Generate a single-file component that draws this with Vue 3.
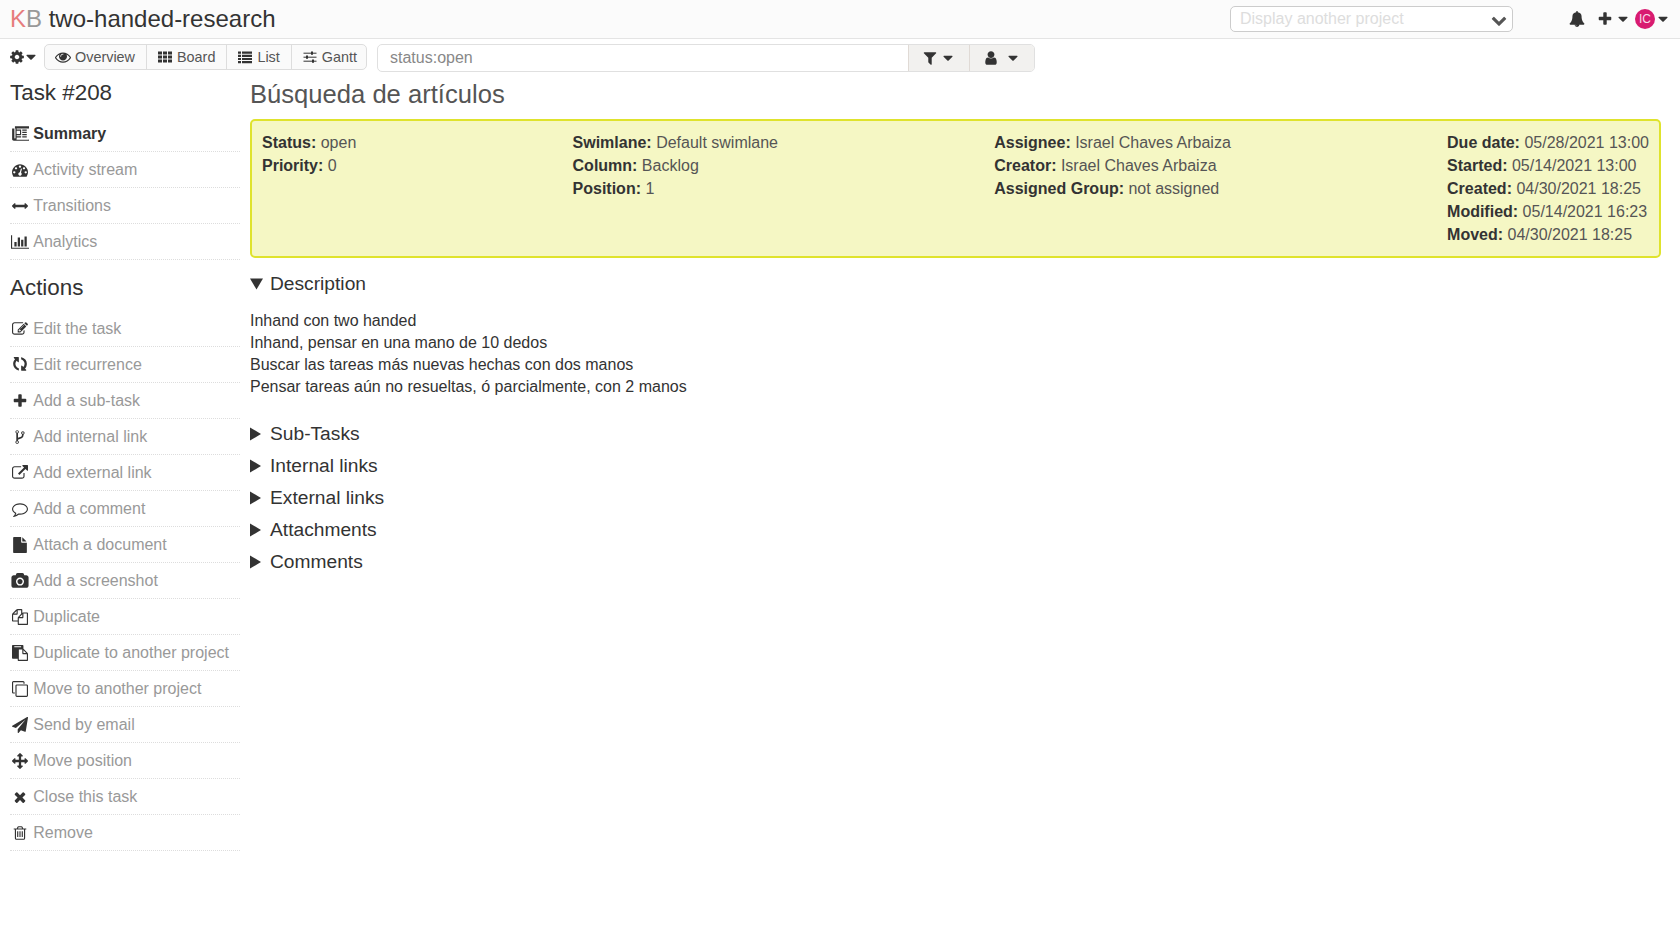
<script setup>
import { h } from 'vue'

const FA = '0 0 1792 1792'
const WIDE = '0 0 2048 1792'
const PLAIN = '0 0 16 16'

const icons = {
  cog: { vb: FA, f: 'M1152 896q0-106-75-181t-181-75-181 75-75 181 75 181 181 75 181-75 75-181zm512-109v222q0 12-8 23t-20 13l-185 28q-19 54-39 91 35 50 107 138 10 12 10 25t-9 23q-27 37-99 108t-94 71q-12 0-26-9l-138-108q-44 23-91 38-16 136-29 186-7 28-36 28h-222q-14 0-24.500-8.500t-11.500-21.500l-28-184q-49-16-90-37l-141 107q-10 9-25 9-14 0-25-11-126-114-165-168-7-10-7-23 0-12 8-23 15-21 51-66.500t54-70.500q-27-50-41-99l-183-27q-13-2-21-12.500t-8-23.500v-222q0-12 8-23t19-13l186-28q14-46 39-92-40-57-107-138-10-12-10-24 0-10 9-23 26-36 98.500-107.500t94.500-71.500q13 0 26 10l138 107q44-23 91-38 16-136 29-186 7-28 36-28h222q14 0 24.500 8.500t11.500 21.500l28 184q49 16 90 37l142-107q9-9 24-9 13 0 25 10 129 119 165 170 7 8 7 22 0 12-8 23-15 21-51 66.500t-54 70.500q26 50 41 98l183 28q13 2 21 12.500t8 23.500z' },
  caret: { vb: FA, f: 'M1408 704q0 26-19 45l-448 448q-19 19-45 19t-45-19l-448-448q-19-19-19-45t19-45 45-19h896q26 0 45 19t19 45z' },
  toggleDown: { vb: PLAIN, f: 'M0 2.500H13L6.500 13.500z' },
  toggleRight: { vb: PLAIN, f: 'M0 1.500L11 8L0 14.500z' },
  chevron: { vb: FA, f: 'M1683 808l-742 741q-19 19-45 19t-45-19l-742-741q-19-19-19-45.500t19-45.500l166-165q19-19 45-19t45 19l531 531 531-531q19-19 45-19t45 19l166 165q19 19 19 45.500t-19 45.500z' },
  bell: { vb: FA, f: 'M912 1696q0-16-16-16-59 0-101.500-42.500t-42.500-101.500q0-16-16-16t-16 16q0 73 51.500 124.500t124.500 51.500q16 0 16-16zm816-288q0 52-38 90t-90 38h-448q0 106-75 181t-181 75-181-75-75-181h-448q-52 0-90-38t-38-90q50-42 91-88t85-119.500 74.500-158.500 50-206 19.500-260q0-152 117-282.500t307-158.500q-8-19-8-39 0-40 28-68t68-28 68 28 28 68q0 20-8 39 190 28 307 158.500t117 282.500q0 139 19.500 260t50 206 74.500 158.500 85 119.500 91 88z' },
  plus: { vb: FA, f: 'M1600 736v192q0 40-28 68t-68 28h-416v416q0 40-28 68t-68 28h-192q-40 0-68-28t-28-68v-416h-416q-40 0-68-28t-28-68v-192q0-40 28-68t68-28h416v-416q0-40 28-68t68-28h192q40 0 68 28t28 68v416h416q40 0 68 28t28 68z' },
  times: { vb: FA, f: 'M1490 1322q0 40-28 68l-136 136q-28 28-68 28t-68-28l-294-294-294 294q-28 28-68 28t-68-28l-136-136q-28-28-28-68t28-68l294-294-294-294q-28-28-28-68t28-68l136-136q28-28 68-28t68 28l294 294 294-294q28-28 68-28t68 28l136 136q28 28 28 68t-28 68l-294 294 294 294q28 28 28 68z' },
  user: { vb: FA, f: 'M1536 1399q0 109-62.500 187t-150.500 78h-854q-88 0-150.500-78t-62.500-187q0-85 8.500-160.500t31.500-152 58.500-131 94-89 134.500-34.500q131 128 313 128t313-128q76 0 134.500 34.500t94 89 58.500 131 31.500 152 8.500 160.500zm-256-887q0 159-112.500 271.500t-271.500 112.500-271.500-112.500-112.500-271.500 112.500-271.500 271.500-112.500 271.500 112.500 112.500 271.500z' },
  filter: { vb: FA, f: 'M1595 295q17 41-14 70l-493 493v742q0 42-39 59-13 5-25 5-27 0-45-19l-256-256q-19-19-19-45v-486l-493-493q-31-29-14-70 17-39 59-39h1280q42 0 59 39z' },
  file: { vb: FA, f: 'M1152 512v-472q22 14 36 28l408 408q14 14 28 36h-472zm-128 32q0 40 28 68t68 28h544v1056q0 40-28 68t-68 28h-1344q-40 0-68-28t-28-68v-1600q0-40 28-68t68-28h800v544z' },
  camera: { vb: '0 0 1920 1792', f: 'M960 672q119 0 203.500 84.500t84.500 203.500-84.500 203.500-203.500 84.500-203.500-84.500-84.500-203.500 84.500-203.500 203.500-84.500zm704-416q106 0 181 75t75 181v896q0 106-75 181t-181 75h-1408q-106 0-181-75t-75-181v-896q0-106 75-181t181-75h224l51-136q19-49 69.500-84.500t103.500-35.500h512q53 0 103.500 35.500t69.500 84.500l51 136h224zm-704 1152q185 0 316.500-131.500t131.500-316.500-131.500-316.500-316.500-131.500-316.500 131.500-131.500 316.500 131.500 316.500 316.500 131.500z' },
  arrows: { vb: FA, f: 'M1792 896q0 26-19 45l-256 256q-19 19-45 19t-45-19-19-45v-128h-384v384h128q26 0 45 19t19 45-19 45l-256 256q-19 19-45 19t-45-19l-256-256q-19-19-19-45t19-45 45-19h128v-384h-384v128q0 26-19 45t-45 19-45-19l-256-256q-19-19-19-45t19-45l256-256q19-19 45-19t45 19 19 45v128h384v-384h-128q-26 0-45-19t-19-45 19-45l256-256q19-19 45-19t45 19l256 256q19 19 19 45t-19 45-45 19h-128v384h384v-128q0-26 19-45t45-19 45 19l256 256q19 19 19 45z' },
  arrowsH: { vb: FA, f: 'M1792 896q0 26-19 45l-256 256q-19 19-45 19t-45-19-19-45v-128h-1024v128q0 26-19 45t-45 19-45-19l-256-256q-19-19-19-45t19-45l256-256q19-19 45-19t45 19 19 45v128h1024v-128q0-26 19-45t45-19 45 19l256 256q19 19 19 45z' },
  plane: { vb: FA, f: 'M1764 11q33 24 27 64l-256 1536q-5 29-32 45-14 8-31 8-11 0-24-5l-453-185-242 295q-18 23-49 23-13 0-22-4-19-7-30.500-23.500t-11.500-36.500v-349l864-1059-1069 925-395-162q-37-14-40-55-2-40 32-59l1664-960q15-9 32-9 19 0 36 11z' },
  eye: { vb: FA, f: 'M1664 960q-152-236-381-353 61 104 61 225 0 185-131.500 316.500t-316.500 131.500-316.500-131.500-131.500-316.500q0-121 61-225-229 117-381 353 133 205 333.500 326.500t434.500 121.500 434.500-121.500 333.500-326.500zm-720-384q0-20-14-34t-34-14q-125 0-214.500 89.500t-89.500 214.500q0 20 14 34t34 14 34-14 14-34q0-86 61-147t147-61q20 0 34-14t14-34zm848 384q0 34-20 69-140 230-376.500 368.500t-499.500 138.500-499.500-139-376.500-368q-20-35-20-69t20-69q140-229 376.500-368t499.500-139 499.500 139 376.500 368q20 35 20 69z' },
  th: { vb: PLAIN, f: 'M1 2.500h4v3H1zM6 2.500h4v3H6zM11 2.500h4v3h-4zM1 6.500h4v3H1zM6 6.500h4v3H6zM11 6.500h4v3h-4zM1 10.500h4v3H1zM6 10.500h4v3H6zM11 10.500h4v3h-4z' },
  list: { vb: PLAIN, f: 'M1 2.500h3v2.200H1zM5 2.500h10v2.200H5zM1 5.700h3v2.200H1zM5 5.700h10v2.200H5zM1 8.900h3v2.200H1zM5 8.900h10v2.200H5zM1 12.100h3v2.200H1zM5 12.100h10v2.200H5z' },
  sliders: { vb: PLAIN, f: 'M9 2.600h2v3.200H9zM4 6.600h2v3.200H4zM10 10.600h2v3.200h-2z', s: 'M1.500 4.200h13M1.500 8.200h13M1.500 12.200h13', sw: 1 },
  newspaper: { vb: WIDE, f: 'M1024 512h-384v384h384v-384zm128 640v128h-640v-128h640zm0-768v640h-640v-640h640zm640 768v128h-512v-128h512zm0-256v128h-512v-128h512zm0-256v128h-512v-128h512zm0-256v128h-512v-128h512zm256 1088v-1216h-1408v1216q0 31-11 64h1355q27 0 45.500-18.500t18.500-45.500zm-1536-128v-1088h-128v1088q0 26 19 45t45 19 45-19 19-45zm1664-1344v1472q0 80-56 136t-136 56h-1664q-80 0-136-56t-56-136v-1216h320v-256h1664z' },
  dash: { vb: FA, f: 'M384 1152q0-53-37.500-90.500t-90.500-37.500-90.500 37.500-37.500 90.500 37.500 90.500 90.500 37.500 90.500-37.500 37.500-90.500zm192-448q0-53-37.500-90.500t-90.500-37.500-90.500 37.500-37.500 90.500 37.500 90.500 90.500 37.500 90.500-37.500 37.500-90.500zm428 481l101-382q6-26-7.500-48.500t-38.500-29.500-48 6.500-30 39.500l-101 382q-60 5-107 43.500t-63 98.500q-20 77 20 146t117 89 146-20 89-117q16-60-6-117t-72-91zm660-33q0-53-37.500-90.500t-90.500-37.500-90.500 37.500-37.500 90.500 37.500 90.500 90.500 37.500 90.500-37.500 37.500-90.500zm-640-640q0-53-37.500-90.500t-90.500-37.500-90.500 37.500-37.500 90.500 37.500 90.500 90.500 37.500 90.500-37.500 37.500-90.500zm448 192q0-53-37.500-90.500t-90.500-37.500-90.500 37.500-37.500 90.500 37.500 90.500 90.500 37.500 90.500-37.500 37.500-90.500zm320 448q0 261-141 483-19 29-54 29h-1402q-35 0-54-29-141-221-141-483 0-182 71-348t191-286 286-191 348-71 348 71 286 191 191 286 71 348z' },
  bars: { vb: WIDE, f: 'M640 896v512h-256v-512h256zm384-512v1024h-256v-1024h256zm1024 1152v128h-2048v-1536h128v1408h1920zm-640-896v768h-256v-768h256zm384-384v1152h-256v-1152h256z' },
  edit: { vb: FA, f: 'M888 1184l116-116-152-152-116 116v56h96v96h56zm440-720q-16-16-33 1l-350 350q-17 17-1 33t33-1l350-350q17-17 1-33zm80 594v190q0 119-84.500 203.500t-203.500 84.500h-832q-119 0-203.500-84.500t-84.500-203.500v-832q0-119 84.500-203.500t203.500-84.500h832q63 0 117 25 15 7 18 23 3 17-9 29l-49 49q-14 14-32 8-23-6-45-6h-832q-66 0-113 47t-47 113v832q0 66 47 113t113 47h832q66 0 113-47t47-113v-126q0-13 9-22l64-64q15-15 35-7t20 29zm-96-738l288 288-672 672h-288v-288zm444 132l-92 92-288-288 92-92q28-28 68-28t68 28l152 152q28 28 28 68t-28 68z' },
  refresh: { vb: FA, rotate: 'rotate(90 896 896)', f: 'M1511 1056q0 5-1 7-64 268-268 434.500t-478 166.500q-146 0-282.500-55t-243.500-157l-129 129q-19 19-45 19t-45-19-19-45v-448q0-26 19-45t45-19h448q26 0 45 19t19 45-19 45l-137 137q71 66 161 102t187 36q134 0 250-65t186-179q11-17 53-117 8-23 30-23h192q13 0 22.500 9.500t9.500 22.500zm25-800v448q0 26-19 45t-45 19h-448q-26 0-45-19t-19-45 19-45l138-138q-148-137-349-137-134 0-250 65t-186 179q-11 17-53 117-8 23-30 23h-199q-13 0-22.500-9.500t-9.500-22.500v-7q65-268 270-434.500t480-166.500q146 0 284 55.500t245 156.500l130-129q19-19 45-19t45 19 19 45z' },
  fork: { vb: FA, f: 'M672 1472q0-40-28-68t-68-28-68 28-28 68 28 68 68 28 68-28 28-68zm0-1152q0-40-28-68t-68-28-68 28-28 68 28 68 68 28 68-28 28-68zm640 128q0-40-28-68t-68-28-68 28-28 68 28 68 68 28 68-28 28-68zm96 0q0 52-26 96.500t-70 69.500q-2 287-226 414-67 38-203 81-128 40-169.500 71t-41.500 100v26q44 25 70 69.500t26 96.500q0 80-56 136t-136 56-136-56-56-136q0-52 26-96.500t70-69.500v-820q-44-25-70-69.500t-26-96.500q0-80 56-136t136-56 136 56 56 136q0 52-26 96.500t-70 69.500v497q54-26 154-57 55-17 87.500-29.500t70.500-31 59-39.500 40.500-51 28-69.500 8.500-91.500q-44-25-70-69.500t-26-96.500q0-80 56-136t136-56 136 56 56 136z' },
  external: { vb: FA, f: 'M1408 928v320q0 119-84.500 203.500t-203.500 84.500h-832q-119 0-203.500-84.500t-84.500-203.500v-832q0-119 84.500-203.500t203.500-84.500h704q14 0 23 9t9 23v64q0 14-9 23t-23 9h-704q-66 0-113 47t-47 113v832q0 66 47 113t113 47h832q66 0 113-47t47-113v-320q0-14 9-23t23-9h64q14 0 23 9t9 23zm384-864v512q0 26-19 45t-45 19-45-19l-176-176-652 652q-10 10-23 10t-23-10l-114-114q-10-10-10-23t10-23l652-652-176-176q-19-19-19-45t19-45 45-19h512q26 0 45 19t19 45z' },
  comment: { vb: FA, f: 'M896 384q-204 0-381.500 69.500t-282 187.500-104.500 255q0 112 71.500 213.500t201.500 175.500l87 50-27 96q-24 91-70 172 152-63 275-171l43-38 57 6q69 8 130 8 204 0 381.500-69.500t282-187.500 104.500-255-104.500-255-282-187.500-381.500-69.500zm896 512q0 174-120 321.500t-326 233-450 85.500q-70 0-145-8-198 175-460 242-49 14-114 22h-5q-15 0-27-10.500t-16-27.500v-1q-3-4-.5-12t2-10 4.500-9.500l6-9 7-8.500 8-9q7-8 31-34.500t34.500-38 31-39.500 32.500-51 27-59 26-76q-157-89-247.500-220t-90.500-281q0-174 120-321.500t326-233 450-85.500 450 85.500 326 233 120 321.500z' },
  files: { vb: FA, f: 'M1696 384q40 0 68 28t28 68v1216q0 40-28 68t-68 28h-960q-40 0-68-28t-28-68v-288h-544q-40 0-68-28t-28-68v-672q0-40 20-88t48-76l408-408q28-28 76-48t88-20h416q40 0 68 28t28 68v328q68-40 128-40h416zm-544 213l-299 299h299v-299zm-640-384l-299 299h299v-299zm196 647l316-316v-416h-384v416q0 40-28 68t-68 28h-416v640h512v-256q0-40 20-88t48-76zm956 804v-1152h-384v416q0 40-28 68t-68 28h-416v640h896z' },
  paste: { vb: FA, f: 'M768 1664h896v-640h-416q-40 0-68-28t-28-68v-416h-384v1152zm256-1440v-64q0-13-9.500-22.500t-22.500-9.500h-704q-13 0-22.500 9.500t-9.500 22.500v64q0 13 9.500 22.500t22.500 9.500h704q13 0 22.500-9.500t9.500-22.500zm256 672h299l-299-299v299zm512 128v672q0 40-28 68t-68 28h-960q-40 0-68-28t-28-68v-160h-544q-40 0-68-28t-28-68v-1344q0-40 28-68t68-28h1088q40 0 68 28t28 68v328q21 13 36 28l408 408q28 28 48 76t20 88z' },
  clone: { vb: FA, f: 'M1664 1632v-1088q0-13-9.500-22.500t-22.500-9.500h-1088q-13 0-22.500 9.500t-9.500 22.500v1088q0 13 9.500 22.500t22.500 9.500h1088q13 0 22.500-9.500t9.500-22.500zm128-1088v1088q0 66-47 113t-113 47h-1088q-66 0-113-47t-47-113v-1088q0-66 47-113t113-47h1088q66 0 113 47t47 113zm-384-384v160h-128v-160q0-13-9.500-22.500t-22.500-9.500h-1088q-13 0-22.500 9.500t-9.500 22.500v1088q0 13 9.500 22.500t22.500 9.500h160v128h-160q-66 0-113-47t-47-113v-1088q0-66 47-113t113-47h1088q66 0 113 47t47 113z' },
  trash: { vb: FA, f: 'M704 736v576q0 14-9 23t-23 9h-64q-14 0-23-9t-9-23v-576q0-14 9-23t23-9h64q14 0 23 9t9 23zm256 0v576q0 14-9 23t-23 9h-64q-14 0-23-9t-9-23v-576q0-14 9-23t23-9h64q14 0 23 9t9 23zm256 0v576q0 14-9 23t-23 9h-64q-14 0-23-9t-9-23v-576q0-14 9-23t23-9h64q14 0 23 9t9 23zm128 724v-948h-896v948q0 22 7 40.500t14.500 27 10.500 8.500h832q3 0 10.500-8.500t14.500-27 7-40.500zm-672-1076h448l-48-117q-7-9-17-11h-317q-10 2-17 11zm928 32v64q0 14-9 23t-23 9h-96v948q0 83-47 143.500t-113 60.500h-832q-66 0-113-58.500t-47-141.500v-952h-96q-14 0-23-9t-9-23v-64q0-14 9-23t23-9h309l70-167q15-37 54-63t79-26h320q40 0 79 26t54 63l70 167h309q14 0 23 9t9 23z' },
}

const Icon = ({ name }) => {
  const icon = icons[name]
  const paths = []
  if (icon.f) paths.push(h('path', { d: icon.f, transform: icon.rotate }))
  if (icon.s) paths.push(h('path', { d: icon.s, fill: 'none', stroke: 'currentColor', 'stroke-width': icon.sw }))
  return h('svg', { viewBox: icon.vb, fill: 'currentColor' }, paths)
}
Icon.props = ['name']

const summaryLinks = [
  { label: 'Summary', icon: 'newspaper', active: true },
  { label: 'Activity stream', icon: 'dash' },
  { label: 'Transitions', icon: 'arrowsH' },
  { label: 'Analytics', icon: 'bars' },
]

const actionLinks = [
  { label: 'Edit the task', icon: 'edit' },
  { label: 'Edit recurrence', icon: 'refresh' },
  { label: 'Add a sub-task', icon: 'plus' },
  { label: 'Add internal link', icon: 'fork' },
  { label: 'Add external link', icon: 'external' },
  { label: 'Add a comment', icon: 'comment' },
  { label: 'Attach a document', icon: 'file' },
  { label: 'Add a screenshot', icon: 'camera' },
  { label: 'Duplicate', icon: 'files' },
  { label: 'Duplicate to another project', icon: 'paste' },
  { label: 'Move to another project', icon: 'clone' },
  { label: 'Send by email', icon: 'plane' },
  { label: 'Move position', icon: 'arrows' },
  { label: 'Close this task', icon: 'times' },
  { label: 'Remove', icon: 'trash' },
]

const viewTabs = [
  { label: 'Overview', icon: 'eye' },
  { label: 'Board', icon: 'th' },
  { label: 'List', icon: 'list' },
  { label: 'Gantt', icon: 'sliders' },
]

const summaryColumns = [
  [['Status:', 'open'], ['Priority:', '0']],
  [['Swimlane:', 'Default swimlane'], ['Column:', 'Backlog'], ['Position:', '1']],
  [['Assignee:', 'Israel Chaves Arbaiza'], ['Creator:', 'Israel Chaves Arbaiza'], ['Assigned Group:', 'not assigned']],
  [
    ['Due date:', '05/28/2021 13:00'],
    ['Started:', '05/14/2021 13:00'],
    ['Created:', '04/30/2021 18:25'],
    ['Modified:', '05/14/2021 16:23'],
    ['Moved:', '04/30/2021 18:25'],
  ],
]

const descriptionLines = [
  'Inhand con two handed',
  'Inhand, pensar en una mano de 10 dedos',
  'Buscar las tareas más nuevas hechas con dos manos',
  'Pensar tareas aún no resueltas, ó parcialmente, con 2 manos',
]

const collapsedSections = ['Sub-Tasks', 'Internal links', 'External links', 'Attachments', 'Comments']
</script>

<template>
  <div class="page">
    <header class="topbar">
      <div class="topbar__title"><span class="logo"><span class="logo__k">K</span>B</span> two-handed-research</div>
      <div class="project-select">
        <span>Display another project</span>
        <Icon name="chevron" class="ico ico--chevron" />
      </div>
      <div class="topbar__menu">
        <Icon name="bell" class="ico" />
        <span class="topbar__plus">
          <Icon name="plus" class="ico" />
          <Icon name="caret" class="ico ico--caret" />
        </span>
        <span class="topbar__user">
          <span class="avatar">IC</span>
          <Icon name="caret" class="ico" />
        </span>
      </div>
    </header>

    <div class="toolbar">
      <div class="gear">
        <Icon name="cog" class="ico" />
        <Icon name="caret" class="ico ico--gear-caret" />
      </div>
      <nav class="views">
        <a v-for="tab in viewTabs" :key="tab.label" class="views__tab">
          <Icon :name="tab.icon" class="ico" />
          {{ tab.label }}
        </a>
      </nav>
      <div class="search">
        <div class="search__input">status:open</div>
        <div class="search__btn">
          <Icon name="filter" class="ico" />
          <Icon name="caret" class="ico" />
        </div>
        <div class="search__btn search__btn--user">
          <Icon name="user" class="ico" />
          <Icon name="caret" class="ico" />
        </div>
      </div>
    </div>

    <div class="layout">
      <aside class="sidebar">
        <h2 class="sidebar__title">Task #208</h2>
        <ul class="sidebar__list">
          <li v-for="link in summaryLinks" :key="link.label" :class="['sidebar__item', { active: link.active }]">
            <Icon :name="link.icon" class="ico" />
            <span>{{ link.label }}</span>
          </li>
        </ul>
        <h2 class="sidebar__title sidebar__title--actions">Actions</h2>
        <ul class="sidebar__list">
          <li v-for="link in actionLinks" :key="link.label" class="sidebar__item">
            <Icon :name="link.icon" class="ico" />
            <span>{{ link.label }}</span>
          </li>
        </ul>
      </aside>

      <main class="content">
        <h1 class="content__title">Búsqueda de artículos</h1>
        <section class="summary">
          <div v-for="(column, i) in summaryColumns" :key="i" class="summary__column">
            <div v-for="row in column" :key="row[0]" class="summary__row">
              <strong>{{ row[0] }}</strong> {{ row[1] }}
            </div>
          </div>
        </section>

        <div class="accordion accordion--open">
          <Icon name="toggleDown" class="ico" />
          <span>Description</span>
        </div>
        <div class="description">
          <div v-for="line in descriptionLines" :key="line">{{ line }}</div>
        </div>

        <div v-for="title in collapsedSections" :key="title" class="accordion">
          <Icon name="toggleRight" class="ico" />
          <span>{{ title }}</span>
        </div>
      </main>
    </div>
  </div>
</template>

<style>
html,
body {
  margin: 0;
  background: #fff;
}
</style>

<style scoped>
.page {
  min-height: 945px;
  font-family: "Liberation Sans", Arial, sans-serif;
  font-size: 16px;
  color: #333;
}

.ico {
  width: 16px;
  height: 16px;
  flex: none;
}

.topbar {
  display: flex;
  align-items: center;
  height: 38px;
  padding: 0 10px;
  border-bottom: 1px solid #e4e4e4;
  background: #fbfbfb;
}

.topbar__title {
  flex: 1;
  font-size: 24px;
}

.logo {
  color: #999;
}

.logo__k {
  color: #e77d7d;
}

.project-select {
  display: flex;
  align-items: center;
  justify-content: space-between;
  box-sizing: border-box;
  width: 283px;
  height: 26px;
  padding: 0 5px 0 9px;
  border: 1px solid #ccc;
  border-radius: 5px;
  background: #fff;
  color: #ddd;
}

.ico--chevron {
  margin-top: 2px;
  color: #555;
}

.topbar__menu {
  display: flex;
  align-items: center;
  margin-left: 56px;
  width: 101px;
}

.topbar__plus {
  display: flex;
  align-items: center;
  margin-left: 12px;
}

.ico--caret {
  margin-left: 2px;
}

.topbar__user {
  display: flex;
  align-items: center;
  margin-left: 4px;
}

.avatar {
  display: flex;
  align-items: center;
  justify-content: center;
  width: 20px;
  height: 20px;
  border-radius: 50%;
  background: #d81b70;
  color: #f8dbe7;
  font-size: 12px;
}

.toolbar {
  display: flex;
  align-items: flex-start;
  gap: 10px;
  padding: 5px 10px 0;
}

.gear {
  display: flex;
  align-items: center;
  width: 24px;
  height: 26px;
  margin-left: -1px;
  margin-right: 1px;
}

.ico--gear-caret {
  margin-left: -2px;
}

.views {
  display: flex;
  height: 26px;
  box-sizing: border-box;
  border: 1px solid #ddd;
  border-radius: 5px;
  background: #fafafa;
  font-size: 14.4px;
}

.views__tab {
  display: flex;
  align-items: center;
  gap: 4px;
  padding: 0 11px 0 10px;
  border-right: 1px solid #ddd;
  color: #555;
}

.views__tab:last-child {
  padding-right: 9px;
  border-right: 0;
}

.views__tab .ico {
  color: #333;
}

.search {
  display: flex;
  height: 28px;
  box-sizing: border-box;
  border: 1px solid #e0e0e0;
  border-radius: 5px;
}

.search__input {
  width: 506px;
  padding: 0 12px;
  color: #888;
  line-height: 26px;
}

.search__btn {
  display: flex;
  align-items: center;
  justify-content: center;
  gap: 2px;
  width: 60px;
  border-left: 1px solid #e0dad5;
  background: #f2f1ef;
}

.search__btn--user {
  gap: 6px;
  width: 64px;
  border-radius: 0 4px 4px 0;
}

.layout {
  display: flex;
}

.sidebar {
  flex: none;
  width: 230px;
  margin-left: 10px;
}

.sidebar__title {
  margin: 0 0 8px;
  padding-top: 6px;
  font-size: 22.4px;
  font-weight: 400;
  line-height: 30px;
}

.sidebar__title--actions {
  margin-bottom: 8px;
  padding-top: 13px;
}

.sidebar__list {
  margin: 0;
  padding: 0;
  list-style: none;
}

.sidebar__item {
  display: flex;
  align-items: center;
  gap: 4.3px;
  box-sizing: border-box;
  height: 36px;
  padding-left: 1px;
  border-bottom: 1px dotted #ddd;
  color: #999;
}

.sidebar__item .ico {
  width: 18px;
  color: #333;
}

.sidebar__item.active {
  color: #333;
  font-weight: 700;
}

.content {
  flex: 1;
  min-width: 0;
  margin: 0 19px 0 10px;
}

.content__title {
  margin: 0;
  padding-top: 2px;
  color: #555;
  font-size: 25.6px;
  font-weight: 400;
  line-height: 40px;
}

.summary {
  display: flex;
  justify-content: space-between;
  box-sizing: border-box;
  height: 139px;
  margin-top: 5px;
  padding: 10px;
  border: 2px solid #dfe32d;
  border-radius: 5px;
  background: #f5f7c4;
  color: #555;
  line-height: 23px;
}

.summary strong {
  color: #333;
}

.accordion {
  display: flex;
  align-items: center;
  gap: 4px;
  height: 32px;
  color: #333;
  font-size: 19.2px;
}

.accordion--open {
  margin-top: 10px;
}

.description {
  margin: 10px 0 20px;
  line-height: 22px;
}
</style>
